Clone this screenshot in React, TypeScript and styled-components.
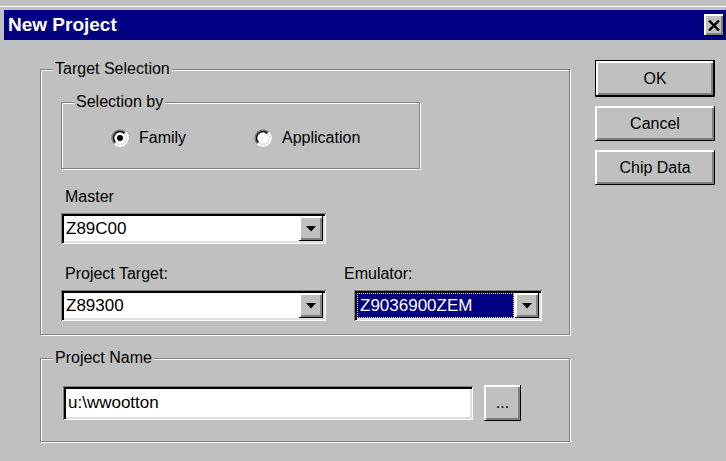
import { useState } from 'react';
import styled, { createGlobalStyle } from 'styled-components';

const GlobalStyle = createGlobalStyle`
    html, body {
        margin: 0;
        padding: 0;
        background: #c0c0c0;
    }
    body {
        font-family: 'Liberation Sans', Arial, sans-serif;
        font-size: 16px;
        color: #000;
    }
`;

const raised = `
    box-shadow: inset -1px -1px 0 #000, inset 2px 2px 0 #fff, inset -3px -3px 0 #808080;
`;

const sunken = `
    box-shadow: inset 1px 1px 0 #808080, inset -1px -1px 0 #fff, inset 3px 3px 0 #000, inset -3px -3px 0 #dfdfdf;
`;

const Window = styled.div`
    width: 726px;
    height: 461px;
    box-sizing: border-box;
    padding: 10px 0 0 4px;
    background: linear-gradient(#c0c0c0 0 6px, #fff 6px 7px, #c0c0c0 7px);
    overflow: hidden;
`;

const TitleBar = styled.div`
    height: 30px;
    background: #000080;
    display: flex;
    align-items: center;
    justify-content: space-between;
    padding: 0 2px 0 4px;
`;

const Title = styled.span`
    color: #fff;
    font-weight: bold;
    font-size: 19px;
`;

const CloseButton = styled.button`
    width: 20px;
    height: 22px;
    padding: 0;
    border: 0;
    background: #c0c0c0;
    display: flex;
    align-items: center;
    justify-content: center;
    ${raised}
`;

const Body = styled.div`
    display: flex;
    padding: 20px 0 0 36px;
`;

const LeftColumn = styled.div`
    width: 530px;
    display: flex;
    flex-direction: column;
    gap: 14px;
`;

const Group = styled.fieldset<{ $width?: number }>`
    margin: 0;
    padding: 0;
    min-width: 0;
    width: ${(p) => (p.$width ? `${p.$width}px` : 'auto')};
    border: 1px solid #808080;
    box-shadow: inset 1px 1px 0 #fff, 1px 1px 0 #fff;
`;

const Legend = styled.legend`
    margin-left: 12px;
    padding: 0 2px;
    line-height: 18px;
    background: #c0c0c0;
`;

const GroupBody = styled.div<{ $pad: string }>`
    padding: ${(p) => p.$pad};
`;

const RadioRow = styled.div`
    display: flex;
    align-items: center;
    height: 20px;
`;

const RadioOption = styled.label<{ $width: number }>`
    display: flex;
    align-items: center;
    gap: 10px;
    width: ${(p) => p.$width}px;
`;

const FieldLabel = styled.div<{ $top: number }>`
    line-height: 18px;
    padding-left: 4px;
    margin-top: ${(p) => p.$top}px;
    margin-bottom: 7px;
`;

const TargetRow = styled.div`
    display: flex;
`;

const TargetColumn = styled.div<{ $width: number; $offset: number }>`
    width: ${(p) => p.$width}px;
    margin-left: ${(p) => p.$offset}px;
`;

const ComboBox = styled.div<{ $indent?: number }>`
    height: 31px;
    box-sizing: border-box;
    padding: 3px;
    margin-left: ${(p) => p.$indent ?? 0}px;
    background: #fff;
    display: flex;
    ${sunken}
`;

const ComboField = styled.div<{ $selected?: boolean }>`
    flex: 1;
    display: flex;
    align-items: center;
    font-size: 17px;
    padding-left: ${(p) => (p.$selected ? 3 : 2)}px;
    margin-right: 1px;
    background: ${(p) => (p.$selected ? '#000080' : '#fff')};
    color: ${(p) => (p.$selected ? '#fff' : '#000')};
    outline: ${(p) => (p.$selected ? '1px dotted #ffff00' : 'none')};
    outline-offset: -1px;
`;

const ArrowButton = styled.div`
    width: 24px;
    background: #c0c0c0;
    display: flex;
    align-items: center;
    justify-content: center;
    ${raised}
`;

const NameRow = styled.div`
    display: flex;
    align-items: center;
    gap: 11px;
`;

const TextInput = styled.div`
    width: 410px;
    height: 34px;
    box-sizing: border-box;
    padding: 0 5px;
    background: #fff;
    display: flex;
    align-items: center;
    font-size: 17px;
    ${sunken}
`;

const ButtonColumn = styled.div`
    margin-left: 25px;
    display: flex;
    flex-direction: column;
    gap: 9px;
`;

const PushButton = styled.button<{ $default?: boolean; $width?: number; $height?: number }>`
    width: ${(p) => p.$width ?? 120}px;
    height: ${(p) => p.$height ?? (p.$default ? 37 : 35)}px;
    box-sizing: border-box;
    padding: 0;
    border: ${(p) => (p.$default ? '1px solid #000' : '0')};
    background: #c0c0c0;
    font-family: 'Liberation Sans', Arial, sans-serif;
    font-size: 16px;
    color: #000;
    ${raised}
`;

const Radio = ({ checked }: { checked: boolean }) => (
    <svg width='18' height='18' viewBox='0 0 18 18'>
        <circle cx='9' cy='9' r='8' fill='#fff' />
        <path d='M3.34 14.66 A8 8 0 0 1 14.66 3.34' fill='none' stroke='#808080' strokeWidth='1.5' />
        <path d='M14.66 3.34 A8 8 0 0 1 3.34 14.66' fill='none' stroke='#fff' strokeWidth='1.5' />
        <path d='M4.4 13.6 A6.5 6.5 0 0 1 13.6 4.4' fill='none' stroke='#000' strokeWidth='1.5' />
        <path d='M13.6 4.4 A6.5 6.5 0 0 1 4.4 13.6' fill='none' stroke='#dfdfdf' strokeWidth='1.5' />
        {checked && <circle cx='9' cy='9' r='3' fill='#000' />}
    </svg>
);

const DownArrow = () => (
    <svg width='10' height='6' viewBox='0 0 10 6'>
        <path d='M0 0 H10 L5 5.5 Z' fill='#000' />
    </svg>
);

const Combo = ({ value, selected, indent }: { value: string; selected?: boolean; indent?: number }) => (
    <ComboBox $indent={indent}>
        <ComboField $selected={selected}>{value}</ComboField>
        <ArrowButton>
            <DownArrow />
        </ArrowButton>
    </ComboBox>
);

const App = () => {
    const [selectBy, setSelectBy] = useState<'family' | 'application'>('family');

    return (
        <>
            <GlobalStyle />
            <Window>
                <TitleBar>
                    <Title>New Project</Title>
                    <CloseButton>
                        <svg width='12' height='11' viewBox='0 0 12 11'>
                            <path d='M1 0.5 L11 10.5 M11 0.5 L1 10.5' stroke='#000' strokeWidth='2.4' />
                        </svg>
                    </CloseButton>
                </TitleBar>
                <Body>
                    <LeftColumn>
                        <Group>
                            <Legend>Target Selection</Legend>
                            <GroupBody $pad='15px 20px 13px 20px'>
                                <Group $width={357}>
                                    <Legend>Selection by</Legend>
                                    <GroupBody $pad='17px 0 20px 49px'>
                                        <RadioRow>
                                            <RadioOption $width={143} onClick={() => setSelectBy('family')}>
                                                <Radio checked={selectBy === 'family'} />
                                                Family
                                            </RadioOption>
                                            <RadioOption $width={140} onClick={() => setSelectBy('application')}>
                                                <Radio checked={selectBy === 'application'} />
                                                Application
                                            </RadioOption>
                                        </RadioRow>
                                    </GroupBody>
                                </Group>
                                <FieldLabel $top={19}>Master</FieldLabel>
                                <TargetRow>
                                    <TargetColumn $width={265} $offset={0}>
                                        <Combo value='Z89C00' />
                                    </TargetColumn>
                                </TargetRow>
                                <TargetRow>
                                    <TargetColumn $width={265} $offset={0}>
                                        <FieldLabel $top={21}>Project Target:</FieldLabel>
                                        <Combo value='Z89300' />
                                    </TargetColumn>
                                    <TargetColumn $width={202} $offset={14}>
                                        <FieldLabel $top={21}>Emulator:</FieldLabel>
                                        <Combo value='Z9036900ZEM' selected indent={14} />
                                    </TargetColumn>
                                </TargetRow>
                            </GroupBody>
                        </Group>
                        <Group>
                            <Legend>Project Name</Legend>
                            <GroupBody $pad='18px 22px 20px 22px'>
                                <NameRow>
                                    <TextInput>u:\wwootton</TextInput>
                                    <PushButton $width={37} $height={36}>...</PushButton>
                                </NameRow>
                            </GroupBody>
                        </Group>
                    </LeftColumn>
                    <ButtonColumn>
                        <PushButton $default>OK</PushButton>
                        <PushButton>Cancel</PushButton>
                        <PushButton>Chip Data</PushButton>
                    </ButtonColumn>
                </Body>
            </Window>
        </>
    );
};

export default App;
